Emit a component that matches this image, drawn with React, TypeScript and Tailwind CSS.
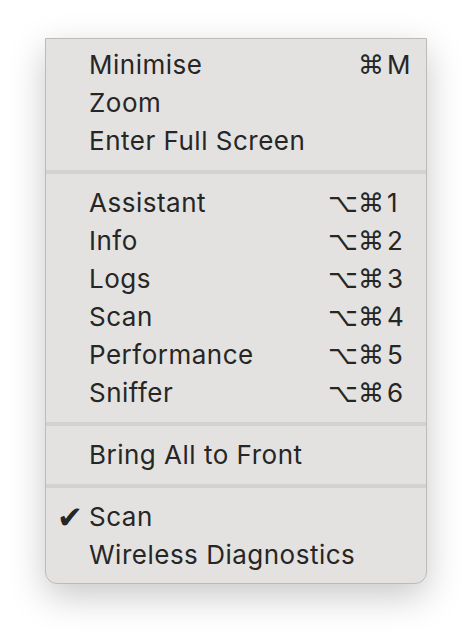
import React from "react";

type Item = { label: string; mods?: string; key?: string; checked?: boolean };

const groups: Item[][] = [
  [
    { label: "Minimise", mods: "⌘", key: "M" },
    { label: "Zoom" },
    { label: "Enter Full Screen" },
  ],
  [
    { label: "Assistant", mods: "⌥⌘", key: "1" },
    { label: "Info", mods: "⌥⌘", key: "2" },
    { label: "Logs", mods: "⌥⌘", key: "3" },
    { label: "Scan", mods: "⌥⌘", key: "4" },
    { label: "Performance", mods: "⌥⌘", key: "5" },
    { label: "Sniffer", mods: "⌥⌘", key: "6" },
  ],
  [{ label: "Bring All to Front" }],
  [{ label: "Scan", checked: true }, { label: "Wireless Diagnostics" }],
];

function Row({ item }: { item: Item }) {
  return (
    <div className="relative flex h-[38px] items-center pl-[43px] pr-[15px] text-[26px] leading-none text-[#262626]">
      {item.checked && (
        <span
          className="absolute inset-y-0 left-[11px] flex items-center text-[31px] leading-none text-[#262626]"
          style={{ fontFamily: '"DejaVu Sans", sans-serif' }}
        >
          ✔
        </span>
      )}
      <span
        className="flex-1 tracking-[0.5px]"
        style={{ fontFamily: 'Inter, "Noto Sans", sans-serif' }}
      >
        {item.label}
      </span>
      {item.key && (
        <span className="flex items-center">
          <span
            className="text-[26px] leading-none tracking-[0px]"
            style={{ fontFamily: '"DejaVu Sans", sans-serif' }}
          >
            {item.mods}
          </span>
          <span
            className="ml-[3px] w-[24px] text-left"
            style={{ fontFamily: 'Inter, "Noto Sans", sans-serif' }}
          >
            {item.key}
          </span>
        </span>
      )}
    </div>
  );
}

function Separator() {
  return (
    <div className="flex h-[24px] items-center">
      <div className="h-[4px] w-full bg-[#d3d2d0]" />
    </div>
  );
}

export default function App() {
  return (
    <div className="min-h-[636px] w-[472px] bg-white pl-[45px] pt-[38px]">
      <div className="w-[382px] rounded-b-[12px] border border-[#bcbbba] bg-[#e3e2e0] pt-[7px] pb-[9px] shadow-[0_12px_36px_rgba(0,0,0,0.22)]">
        {groups.map((g, gi) => (
          <React.Fragment key={gi}>
            {gi > 0 && <Separator />}
            {g.map((it, i) => (
              <Row key={i} item={it} />
            ))}
          </React.Fragment>
        ))}
      </div>
    </div>
  );
}
